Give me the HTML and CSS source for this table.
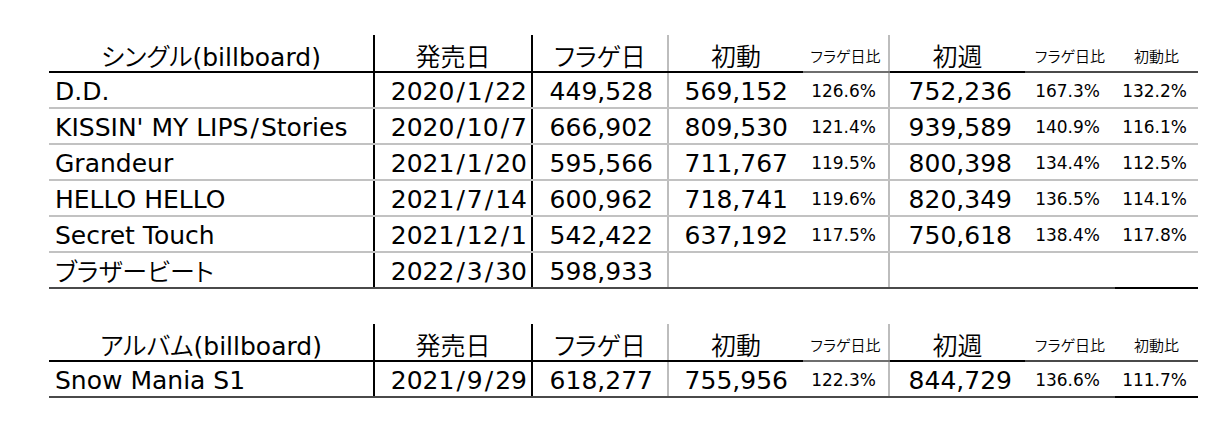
FILE: index.html
```html
<!DOCTYPE html>
<html lang="ja">
<head>
<meta charset="utf-8">
<title>Snow Man 売上</title>
<link rel="stylesheet" href="styles.css">
</head>
<body>
<div class="sheet">
  <table class="sales">
    <colgroup>
      <col class="c-name"><col class="c-date"><col class="c-flag"><col class="c-sho"><col class="c-p1"><col class="c-shu"><col class="c-p2"><col class="c-p3">
    </colgroup>
    <thead>
      <tr>
        <th class="h-big"><span class="jp">シングル</span>(billboard)</th>
        <th class="h-big vb"><span class="jp">発売日</span></th>
        <th class="h-big vb"><span class="jp">フラゲ日</span></th>
        <th class="h-big vg"><span class="jp">初動</span></th>
        <th class="h-small h-light"><span class="jp">フラゲ日比</span></th>
        <th class="h-big vg"><span class="jp">初週</span></th>
        <th class="h-small h-dark"><span class="jp">フラゲ日比</span></th>
        <th class="h-small h-dark"><span class="jp">初動比</span></th>
      </tr>
    </thead>
    <tbody>
      <tr>
        <td class="name">D.D.</td>
        <td class="date vb">2020<span class="sl">/</span>1<span class="sl">/</span>22</td>
        <td class="flag vb">449,528</td>
        <td class="sho vg">569,152</td>
        <td class="p1">126.6%</td>
        <td class="shu vg">752,236</td>
        <td class="p2">167.3%</td>
        <td class="p3">132.2%</td>
      </tr>
      <tr>
        <td class="name">KISSIN' MY LIPS<span class="sl">/</span>Stories</td>
        <td class="date vb">2020<span class="sl">/</span>10<span class="sl">/</span>7</td>
        <td class="flag vb">666,902</td>
        <td class="sho vg">809,530</td>
        <td class="p1">121.4%</td>
        <td class="shu vg">939,589</td>
        <td class="p2">140.9%</td>
        <td class="p3">116.1%</td>
      </tr>
      <tr>
        <td class="name">Grandeur</td>
        <td class="date vb">2021<span class="sl">/</span>1<span class="sl">/</span>20</td>
        <td class="flag vb">595,566</td>
        <td class="sho vg">711,767</td>
        <td class="p1">119.5%</td>
        <td class="shu vg">800,398</td>
        <td class="p2">134.4%</td>
        <td class="p3">112.5%</td>
      </tr>
      <tr>
        <td class="name">HELLO HELLO</td>
        <td class="date vb">2021<span class="sl">/</span>7<span class="sl">/</span>14</td>
        <td class="flag vb">600,962</td>
        <td class="sho vg">718,741</td>
        <td class="p1">119.6%</td>
        <td class="shu vg">820,349</td>
        <td class="p2">136.5%</td>
        <td class="p3">114.1%</td>
      </tr>
      <tr>
        <td class="name">Secret Touch</td>
        <td class="date vb">2021<span class="sl">/</span>12<span class="sl">/</span>1</td>
        <td class="flag vb">542,422</td>
        <td class="sho vg">637,192</td>
        <td class="p1">117.5%</td>
        <td class="shu vg">750,618</td>
        <td class="p2">138.4%</td>
        <td class="p3">117.8%</td>
      </tr>
      <tr class="last">
        <td class="name"><span class="jp">ブラザービート</span></td>
        <td class="date vb">2022<span class="sl">/</span>3<span class="sl">/</span>30</td>
        <td class="flag vb">598,933</td>
        <td class="sho vg"></td>
        <td class="p1"></td>
        <td class="shu vg"></td>
        <td class="p2"></td>
        <td class="p3 end"></td>
      </tr>
    </tbody>
  </table>

  <table class="sales">
    <colgroup>
      <col class="c-name"><col class="c-date"><col class="c-flag"><col class="c-sho"><col class="c-p1"><col class="c-shu"><col class="c-p2"><col class="c-p3">
    </colgroup>
    <thead>
      <tr>
        <th class="h-big"><span class="jp">アルバム</span>(billboard)</th>
        <th class="h-big vb"><span class="jp">発売日</span></th>
        <th class="h-big vb"><span class="jp">フラゲ日</span></th>
        <th class="h-big vg"><span class="jp">初動</span></th>
        <th class="h-small h-light"><span class="jp">フラゲ日比</span></th>
        <th class="h-big vg"><span class="jp">初週</span></th>
        <th class="h-small h-dark"><span class="jp">フラゲ日比</span></th>
        <th class="h-small h-dark"><span class="jp">初動比</span></th>
      </tr>
    </thead>
    <tbody>
      <tr class="last">
        <td class="name">Snow Mania S1</td>
        <td class="date vb">2021<span class="sl">/</span>9<span class="sl">/</span>29</td>
        <td class="flag vb">618,277</td>
        <td class="sho vg">755,956</td>
        <td class="p1">122.3%</td>
        <td class="shu vg">844,729</td>
        <td class="p2">136.6%</td>
        <td class="p3 end">111.7%</td>
      </tr>
    </tbody>
  </table>
</div>
</body>
</html>
```

FILE: styles.css
```css
html, body {
  margin: 0;
  padding: 0;
  background: #ffffff;
}

body {
  font-family: "DejaVu Sans", "Noto Sans CJK JP", sans-serif;
  font-feature-settings: "palt";
  color: #000000;
}

.sheet {
  padding: 35px 0 0 49px;
  display: flex;
  flex-direction: column;
  gap: 35px;
}

.sales {
  width: 1149px;
  table-layout: fixed;
  border-collapse: collapse;
}

.c-name { width: 325px; }
.c-date { width: 158px; }
.c-flag { width: 136px; }
.c-sho  { width: 135px; }
.c-p1   { width: 86px; }
.c-shu  { width: 136px; }
.c-p2   { width: 90px; }
.c-p3   { width: 83px; }

.sales thead tr { height: 37px; }
.sales tbody tr { height: 36px; }

.sales th {
  font-weight: normal;
  text-align: center;
  vertical-align: middle;
  padding: 6px 0 0 0;
  line-height: 26px;
  white-space: nowrap;
  border-bottom: 2px solid #000000;
}

.jp {
  font-family: "Noto Sans CJK JP", sans-serif;
  font-weight: 350;
}

.sales th.h-big { font-size: 25px; }
.sales th.h-small { font-size: 15px; }
.sales th.h-light { border-bottom-color: #6e6e6e; }
.sales th.h-dark { border-bottom-color: #4a4a4a; }

.sales td {
  font-size: 25px;
  line-height: 28px;
  vertical-align: middle;
  padding: 3px 0 0 0;
  white-space: nowrap;
  border-bottom: 2px solid #c2c2c2;
}

.sales tr.last td { border-bottom: 2px solid #4a4a4a; }
.sales tr.last td.end { border-bottom-color: #000000; }

.sales .vb { border-left: 2px solid #000000; }
.sales .vg { border-left: 2px solid #bdbdbd; }

.sales td.name { text-align: left; padding-left: 6px; }
.sales td.date { text-align: right; padding-right: 4px; }
.sales td.flag { text-align: right; padding-right: 14px; }
.sales td.sho  { text-align: right; padding-right: 15px; }
.sales td.shu  { text-align: right; padding-right: 13px; }

.sales td.p1,
.sales td.p2,
.sales td.p3 {
  font-size: 17px;
  line-height: 20px;
  text-align: right;
  padding-top: 1px;
}
.sales td.p1 { padding-right: 12px; }
.sales td.p2 { padding-right: 15px; }
.sales td.p3 { padding-right: 11px; }

.sl { margin: 0 2px; }
```
